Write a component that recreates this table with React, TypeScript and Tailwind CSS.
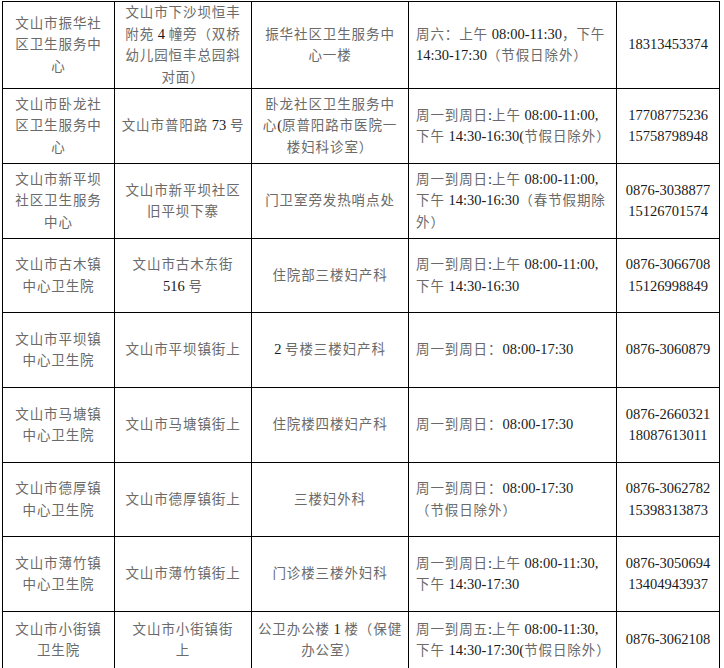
import React from "react"

// one entry per row: [name, address, department, hours, phones]
type Row = {
  h: string
  cells: string[][]
}

const rows: Row[] = [
  {
    h: "h-[86px]",
    cells: [
      ["文山市振华社", "区卫生服务中", "心"],
      ["文山市下沙坝恒丰", "附苑 4 幢旁（双桥", "幼儿园恒丰总园斜", "对面）"],
      ["振华社区卫生服务中", "心一楼"],
      ["周六：上午 08:00-11:30，下午", "14:30-17:30（节假日除外）"],
      ["18313453374"],
    ],
  },
  {
    h: "h-[75px]",
    cells: [
      ["文山市卧龙社", "区卫生服务中", "心"],
      ["文山市普阳路 73 号"],
      ["卧龙社区卫生服务中", "心(原普阳路市医院一", "楼妇科诊室）"],
      ["周一到周日:上午 08:00-11:00,", "下午 14:30-16:30(节假日除外）"],
      ["17708775236", "15758798948"],
    ],
  },
  {
    h: "h-[75px]",
    cells: [
      ["文山市新平坝", "社区卫生服务", "中心"],
      ["文山市新平坝社区", "旧平坝下寨"],
      ["门卫室旁发热哨点处"],
      ["周一到周日:上午 08:00-11:00,", "下午 14:30-16:30（春节假期除", "外）"],
      ["0876-3038877", "15126701574"],
    ],
  },
  {
    h: "h-[74px]",
    cells: [
      ["文山市古木镇", "中心卫生院"],
      ["文山市古木东街", "516 号"],
      ["住院部三楼妇产科"],
      ["周一到周日:上午 08:00-11:00,", "下午 14:30-16:30"],
      ["0876-3066708", "15126998849"],
    ],
  },
  {
    h: "h-[75px]",
    cells: [
      ["文山市平坝镇", "中心卫生院"],
      ["文山市平坝镇街上"],
      ["2 号楼三楼妇产科"],
      ["周一到周日：08:00-17:30"],
      ["0876-3060879"],
    ],
  },
  {
    h: "h-[75px]",
    cells: [
      ["文山市马塘镇", "中心卫生院"],
      ["文山市马塘镇街上"],
      ["住院楼四楼妇产科"],
      ["周一到周日：08:00-17:30"],
      ["0876-2660321", "18087613011"],
    ],
  },
  {
    h: "h-[74px]",
    cells: [
      ["文山市德厚镇", "中心卫生院"],
      ["文山市德厚镇街上"],
      ["三楼妇外科"],
      ["周一到周日：08:00-17:30", "（节假日除外）"],
      ["0876-3062782", "15398313873"],
    ],
  },
  {
    h: "h-[75px]",
    cells: [
      ["文山市薄竹镇", "中心卫生院"],
      ["文山市薄竹镇街上"],
      ["门诊楼三楼外妇科"],
      ["周一到周日:上午 08:00-11:30,", "下午 14:30-17:30"],
      ["0876-3050694", "13404943937"],
    ],
  },
  {
    h: "h-[57px]",
    cells: [
      ["文山市小街镇", "卫生院"],
      ["文山市小街镇街", "上"],
      ["公卫办公楼 1 楼（保健", "办公室）"],
      ["周一到周五:上午 08:00-11:30,", "下午 14:30-17:30(节假日除外）"],
      ["0876-3062108"],
    ],
  },
]

const colWidths = ["w-[112px]", "w-[137px]", "w-[157px]", "w-[208px]", "w-[103px]"]

// chinese runs are drawn smaller and lighter than the digits, like thin song-ti strokes
const Line = ({ text }: { text: string }) => {
  const parts = text.split(/([\u3000-\u303f\u4e00-\u9fff\uff00-\uffef]+)/)
  return (
    <div className="whitespace-nowrap">
      {parts.map((p, i) =>
        /[\u3000-\u303f\u4e00-\u9fff\uff00-\uffef]/.test(p) ? (
          <span key={i} className="text-[13.5px] tracking-[0.9px] text-[#6a6a6a]">
            {p}
          </span>
        ) : (
          <span key={i}>{p}</span>
        )
      )}
    </div>
  )
}

export default function App() {
  return (
    <div className="bg-white w-[724px] h-[668px] overflow-hidden pl-[2px] pt-px">
      <table className="border-collapse table-fixed w-[717px] font-['Liberation_Serif','Noto_Sans_CJK_SC',serif] text-[14.5px] leading-[21.5px] text-[#1a1a1a]">
        <colgroup>
          {colWidths.map((w, i) => (
            <col key={i} className={w} />
          ))}
        </colgroup>
        <tbody>
          {rows.map((row, r) => (
            <tr key={r} className={row.h}>
              {row.cells.map((lines, c) => (
                <td
                  key={c}
                  className={
                    c === 3
                      ? "border border-black align-middle text-left pl-[7px] pr-0 py-0 overflow-visible"
                      : "border border-black align-middle text-center px-0 py-0"
                  }
                >
                  {lines.map((l, k) => (
                    <Line key={k} text={l} />
                  ))}
                </td>
              ))}
            </tr>
          ))}
        </tbody>
      </table>
    </div>
  )
}
